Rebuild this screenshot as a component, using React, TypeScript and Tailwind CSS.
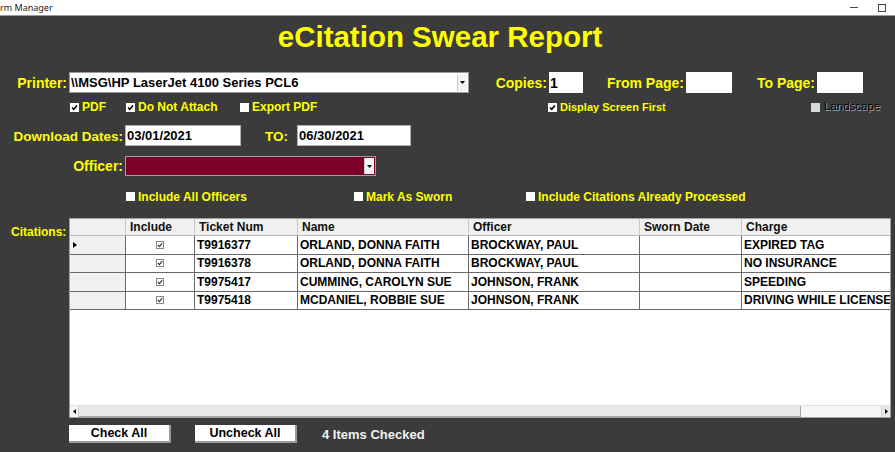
import React from "react";

const Y = "text-[#ffff00]";

function Box({ checked, disabled }: { checked?: boolean; disabled?: boolean }) {
  return (
    <span
      className={`inline-flex items-center justify-center w-[9px] h-[9px] shrink-0 ${
        disabled ? "bg-[#d8d8d8]" : "bg-white"
      }`}
    >
      {checked && (
        <svg width="7" height="7" viewBox="0 0 7 7">
          <path d="M1 3.5 L2.8 5.3 L6 1.5" stroke="#000" strokeWidth="1.6" fill="none" />
        </svg>
      )}
    </span>
  );
}

function Check({ label, checked, size = "text-[12px]", className = "" }: { label: string; checked?: boolean; size?: string; className?: string }) {
  return (
    <div className={`flex items-center gap-[3px] ${className}`}>
      <Box checked={checked} />
      <span className={`${Y} font-bold ${size} leading-none`}>{label}</span>
    </div>
  );
}

function DropBtn() {
  return (
    <div className="w-[10px] h-[16px] bg-[#f4f4f4] border-l border-[#c8c8c8] flex items-center justify-center">
      <svg width="5" height="3" viewBox="0 0 5 3">
        <path d="M0 0 H5 L2.5 3 Z" fill="#000" />
      </svg>
    </div>
  );
}

const rows = [
  ["T9916377", "ORLAND, DONNA FAITH", "BROCKWAY, PAUL", "", "EXPIRED TAG"],
  ["T9916378", "ORLAND, DONNA FAITH", "BROCKWAY, PAUL", "", "NO INSURANCE"],
  ["T9975417", "CUMMING, CAROLYN SUE", "JOHNSON, FRANK", "", "SPEEDING"],
  ["T9975418", "MCDANIEL, ROBBIE SUE", "JOHNSON, FRANK", "", "DRIVING WHILE LICENSE SUSPENDED"],
];

const cols = ["w-[56px]", "w-[69px]", "w-[103px]", "w-[171px]", "w-[171px]", "w-[102px]", "w-[160px]"];

export default function App() {
  return (
    <div
      className="w-[895px] h-[452px] overflow-hidden bg-[#3b3b3b] flex flex-col"
      style={{ fontFamily: '"Liberation Sans", Arial, sans-serif' }}
    >
      {/* window title bar */}
      <div className="h-[16px] bg-white border-b border-[#9a9a9a] flex items-center justify-between shrink-0">
        <span className="text-[9px] text-[#222] leading-none" style={{ fontFamily: '"Noto Sans", sans-serif' }}>
          rm Manager
        </span>
        <div className="flex items-center gap-[20px] pr-[9px]">
          <span className="w-[8px] h-px bg-[#444]" />
          <span className="w-[8px] h-[8px] border border-[#444]" />
        </div>
      </div>

      {/* title */}
      <div className="h-[42px] flex items-center justify-center pr-[15px]">
        <span className={`${Y} font-bold text-[29.5px] leading-none`}>eCitation Swear Report</span>
      </div>

      {/* printer row */}
      <div className="mt-[14px] h-[21px] flex items-center">
        <div className="w-[67px] text-right">
          <span className={`${Y} font-bold text-[14px]`}>Printer:</span>
        </div>
        <div className="ml-[2px] w-[400px] h-[21px] bg-white border border-[#9a9a9a] flex items-center justify-between pr-[1px]">
          <span className="pl-[1px] text-[13px] font-bold text-black leading-none">\\MSG\HP LaserJet 4100 Series PCL6</span>
          <DropBtn />
        </div>
        <div className="w-[78px] text-right">
          <span className={`${Y} font-bold text-[14px]`}>Copies:</span>
        </div>
        <div className="ml-[2px] w-[34px] h-[21px] bg-white flex items-center pl-[1px]">
          <span className="text-[14px] font-bold text-black leading-none">1</span>
        </div>
        <div className="w-[101px] text-right">
          <span className={`${Y} font-bold text-[14px]`}>From Page:</span>
        </div>
        <div className="ml-[2px] w-[46px] h-[21px] bg-white" />
        <div className="w-[83px] text-right">
          <span className={`${Y} font-bold text-[14px]`}>To Page:</span>
        </div>
        <div className="ml-[2px] w-[46px] h-[21px] bg-white" />
      </div>

      {/* checkbox row 1 */}
      <div className="mt-[8px] h-[12px] flex items-center">
        <div className="ml-[70px] w-[56px]">
          <Check label="PDF" checked />
        </div>
        <div className="w-[114px]">
          <Check label="Do Not Attach" checked />
        </div>
        <div className="w-[308px]">
          <Check label="Export PDF" />
        </div>
        <div className="w-[263px]">
          <Check label="Display Screen First" checked size="text-[11px]" />
        </div>
        <div className="flex items-center gap-[4px]">
          <Box disabled />
          <span
            className="text-[11.5px] text-black leading-none"
            style={{ textShadow: "1px 1px 0 #a8a8a8" }}
          >
            Landscape
          </span>
        </div>
      </div>

      {/* download dates */}
      <div className="mt-[12px] h-[21px] flex items-center">
        <div className="w-[123px] text-right">
          <span className={`${Y} font-bold text-[13.5px]`}>Download Dates:</span>
        </div>
        <div className="ml-[2px] w-[116px] h-[21px] bg-white border border-[#b0b0b0] flex items-center pl-[1px]">
          <span className="text-[13px] font-bold text-black leading-none">03/01/2021</span>
        </div>
        <div className="ml-[24px] w-[32px]">
          <span className={`${Y} font-bold text-[13.5px]`}>TO:</span>
        </div>
        <div className="w-[114px] h-[21px] bg-white border border-[#b0b0b0] flex items-center pl-[1px]">
          <span className="text-[13px] font-bold text-black leading-none">06/30/2021</span>
        </div>
      </div>

      {/* officer */}
      <div className="mt-[10px] h-[20px] flex items-center">
        <div className="w-[123px] text-right">
          <span className={`${Y} font-bold text-[14px]`}>Officer:</span>
        </div>
        <div className="ml-[2px] w-[251px] h-[20px] bg-[#7d0029] border border-[#a0a0a0] flex items-center justify-end pr-[1px]">
          <DropBtn />
        </div>
      </div>

      {/* checkbox row 2 */}
      <div className="mt-[14px] h-[13px] flex items-center">
        <div className="ml-[126px] w-[228px]">
          <Check label="Include All Officers" size="text-[12px]" />
        </div>
        <div className="w-[172px]">
          <Check label="Mark As Sworn" size="text-[12px]" />
        </div>
        <div>
          <Check label="Include Citations Already Processed" size="text-[12px]" />
        </div>
      </div>

      {/* citations */}
      <div className="mt-[15px] flex">
        <div className="w-[69px] pl-[11px] pt-[1px]">
          <span className={`${Y} font-bold text-[12px]`}>Citations:</span>
        </div>
        <div className="w-[822px] h-[200px] bg-white border border-[#a0a0a0] flex flex-col overflow-hidden">
          <div className="flex-1 overflow-hidden">
            {/* header */}
            <div className="flex h-[17px] bg-[#f0f0f0] border-b border-[#b8b8b8]">
              {["", "Include", "Ticket Num", "Name", "Officer", "Sworn Date", "Charge"].map((h, i) => (
                <div
                  key={i}
                  className={`${cols[i]} shrink-0 border-r border-[#c8c8c8] flex items-center pl-[4px]`}
                >
                  <span className="text-[12px] font-bold text-[#111] leading-none">{h}</span>
                </div>
              ))}
            </div>
            {rows.map((r, ri) => (
              <div key={ri} className="flex h-[18.5px] border-b border-[#6a6a6a]">
                <div className={`${cols[0]} shrink-0 bg-[#f0f0f0] border-r border-[#6a6a6a] flex items-center pl-[3px]`}>
                  {ri === 0 && (
                    <svg width="4" height="6" viewBox="0 0 4 6">
                      <path d="M0 0 L4 3 L0 6 Z" fill="#000" />
                    </svg>
                  )}
                </div>
                <div className={`${cols[1]} shrink-0 border-r border-[#6a6a6a] flex items-center justify-center`}>
                  <span className="w-[8px] h-[8px] border border-[#8a8a8a] bg-white flex items-center justify-center">
                    <svg width="6" height="6" viewBox="0 0 6 6">
                      <path d="M0.8 3 L2.4 4.6 L5.2 1.2" stroke="#333" strokeWidth="1.1" fill="none" />
                    </svg>
                  </span>
                </div>
                {r.map((c, ci) => (
                  <div
                    key={ci}
                    className={`${cols[ci + 2]} shrink-0 border-r border-[#6a6a6a] flex items-center pl-[2px] overflow-hidden whitespace-nowrap`}
                  >
                    <span className="text-[12px] font-bold text-black leading-none">{c}</span>
                  </div>
                ))}
              </div>
            ))}
          </div>
          {/* horizontal scrollbar */}
          <div className="h-[12px] flex bg-[#f6f6f6] border-t border-[#e0e0e0]">
            <div className="w-[9px] flex items-center justify-center border-r border-[#d0d0d0]">
              <svg width="3" height="5" viewBox="0 0 3 5">
                <path d="M3 0 L0 2.5 L3 5 Z" fill="#000" />
              </svg>
            </div>
            <div className="w-[722px] bg-[#e8e8e8] border-b border-r border-[#a8a8a8]" />
            <div className="flex-1" />
            <div className="w-[9px] flex items-center justify-center border-l border-[#d0d0d0] bg-[#e8e8e8]">
              <svg width="3" height="5" viewBox="0 0 3 5">
                <path d="M0 0 L3 2.5 L0 5 Z" fill="#000" />
              </svg>
            </div>
          </div>
        </div>
      </div>

      {/* buttons */}
      <div className="mt-[7px] h-[18px] flex items-center">
        <div className="ml-[69px] w-[102px] h-[18px] bg-white border-r-2 border-b-2 border-[#9a9a9a] flex items-center justify-center">
          <span className="text-[12.5px] font-bold text-black leading-none">Check All</span>
        </div>
        <div className="ml-[24px] w-[102px] h-[18px] bg-white border-r-2 border-b-2 border-[#9a9a9a] flex items-center justify-center">
          <span className="text-[12.5px] font-bold text-black leading-none">Uncheck All</span>
        </div>
        <span className="ml-[25px] text-[13px] font-bold text-[#f2f2f2] leading-none">4 Items Checked</span>
      </div>
    </div>
  );
}
